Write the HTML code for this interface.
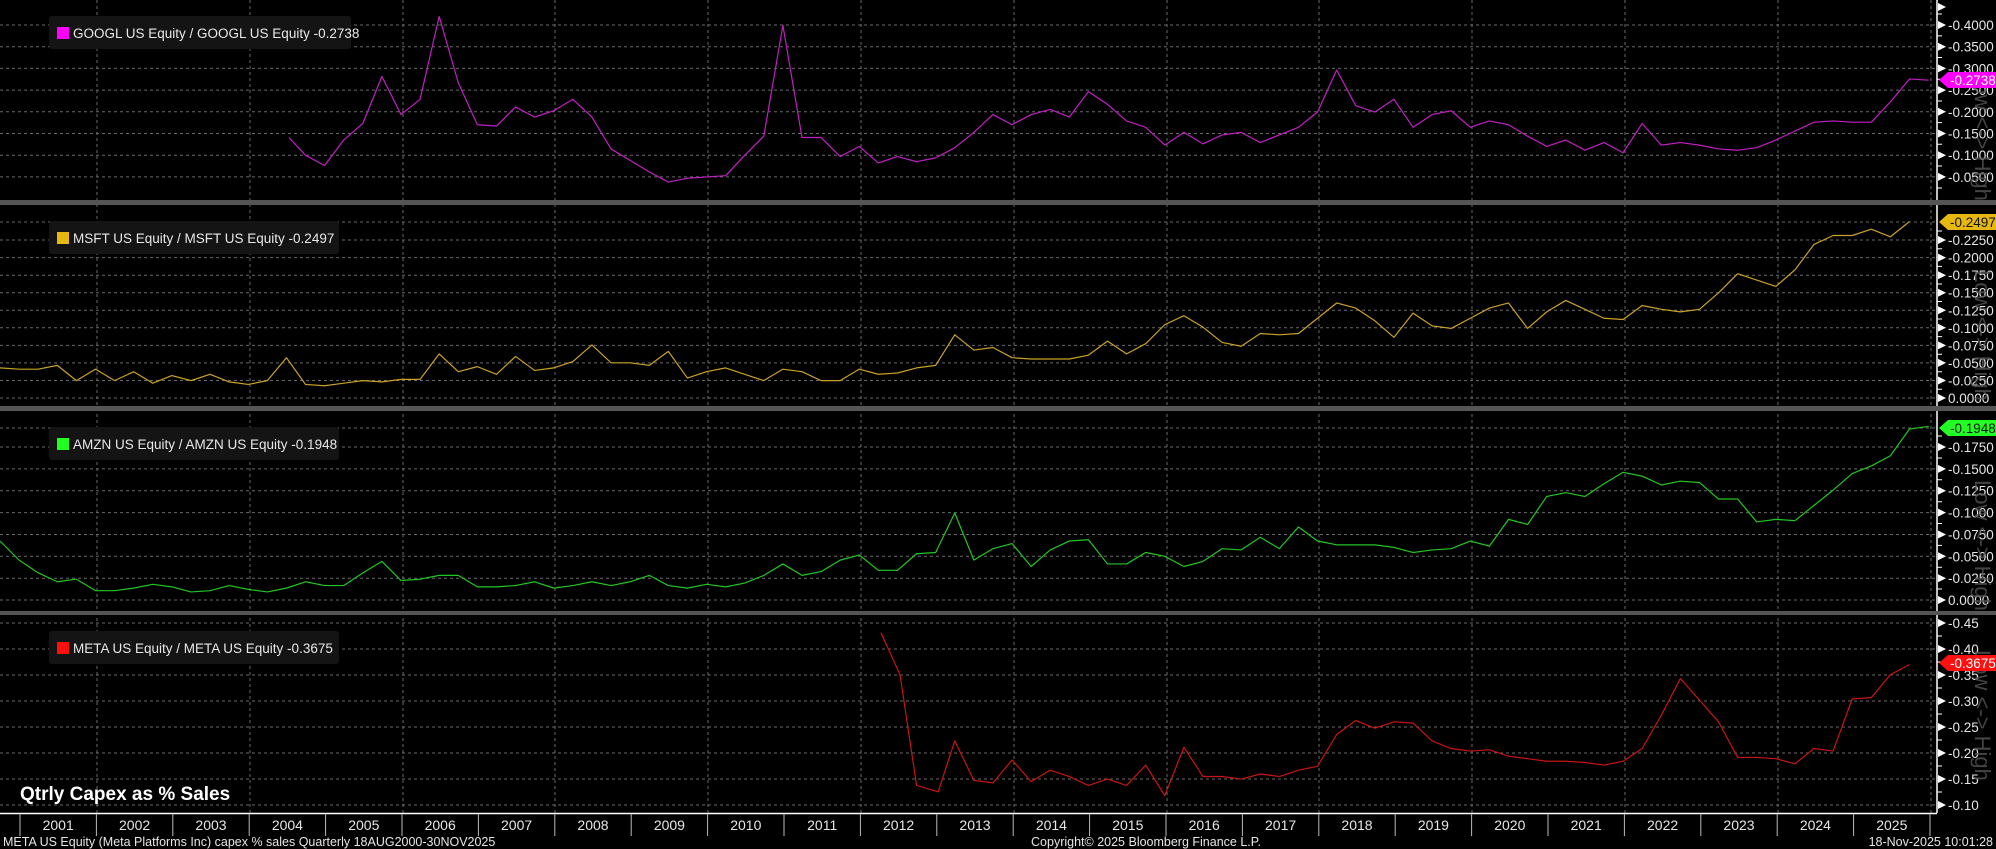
<!DOCTYPE html>
<html><head><meta charset="utf-8"><style>
html,body{margin:0;padding:0;background:#000;overflow:hidden}
svg{display:block}
text{font-family:"Liberation Sans","DejaVu Sans",sans-serif}
</style></head><body>
<svg width="1996" height="849" viewBox="0 0 1996 849" xmlns="http://www.w3.org/2000/svg">
<rect width="1996" height="849" fill="#000"/>
<g stroke="#6a6a6a" stroke-width="1" stroke-dasharray="3,3">
<path d="M0 25H1937M0 46.7H1937M0 68.4H1937M0 90.1H1937M0 111.8H1937M0 133.5H1937M0 155.2H1937M0 176.9H1937"/>
<path d="M0 222H1937M0 240H1937M0 257.6H1937M0 275.2H1937M0 292.7H1937M0 310.3H1937M0 327.8H1937M0 345.4H1937M0 362.9H1937M0 380.5H1937M0 398H1937"/>
<path d="M0 428H1937M0 447H1937M0 468.9H1937M0 490.7H1937M0 512.6H1937M0 534.5H1937M0 556.3H1937M0 578.2H1937M0 600H1937"/>
<path d="M0 623H1937M0 649H1937M0 675H1937M0 701H1937M0 727H1937M0 753H1937M0 779H1937M0 805H1937"/>
<path d="M97 0V813M250 0V813M403 0V813M555 0V813M708 0V813M861 0V813M1014 0V813M1167 0V813M1319 0V813M1472 0V813M1625 0V813M1778 0V813M1931 0V813"/>
</g>
<rect x="0" y="200" width="1996" height="5" fill="#555"/>
<rect x="0" y="406" width="1996" height="5" fill="#555"/>
<rect x="0" y="611" width="1996" height="4" fill="#555"/>
<g stroke="#fff" stroke-width="1.5">
<path d="M1937 0V200M1937 205V406M1937 411V611M1937 615V813"/>
<path d="M0 813.5H1937"/>
</g>
<g fill="#fff">
<path d="M1938 21l8 4-8 4zM1938 42.7l8 4-8 4zM1938 64.4l8 4-8 4zM1938 86.1l8 4-8 4zM1938 107.8l8 4-8 4zM1938 129.5l8 4-8 4zM1938 151.2l8 4-8 4zM1938 172.9l8 4-8 4zM1938 3l8 4-8 4z"/>
<path d="M1938 236l8 4-8 4zM1938 253.6l8 4-8 4zM1938 271.2l8 4-8 4zM1938 288.7l8 4-8 4zM1938 306.3l8 4-8 4zM1938 323.8l8 4-8 4zM1938 341.4l8 4-8 4zM1938 358.9l8 4-8 4zM1938 376.5l8 4-8 4zM1938 394l8 4-8 4z"/>
<path d="M1938 443l8 4-8 4zM1938 464.9l8 4-8 4zM1938 486.7l8 4-8 4zM1938 508.6l8 4-8 4zM1938 530.5l8 4-8 4zM1938 552.3l8 4-8 4zM1938 574.2l8 4-8 4zM1938 596l8 4-8 4z"/>
<path d="M1938 619l8 4-8 4zM1938 645l8 4-8 4zM1938 671l8 4-8 4zM1938 697l8 4-8 4zM1938 723l8 4-8 4zM1938 749l8 4-8 4zM1938 775l8 4-8 4zM1938 801l8 4-8 4z"/>
</g>
<g stroke="#fff" stroke-width="1">
<path d="M1937 14H1942M1937 35.9H1942M1937 57.5H1942M1937 79.2H1942M1937 101H1942M1937 122.6H1942M1937 144.3H1942M1937 166H1942M1937 188H1942"/>
<path d="M1937 231H1942M1937 248.8H1942M1937 266.4H1942M1937 284H1942M1937 301.5H1942M1937 319H1942M1937 336.6H1942M1937 354.2H1942M1937 371.7H1942M1937 389.2H1942"/>
<path d="M1937 436H1942M1937 458H1942M1937 479.8H1942M1937 501.7H1942M1937 523.5H1942M1937 545.4H1942M1937 567.3H1942M1937 589H1942"/>
<path d="M1937 636H1942M1937 662H1942M1937 688H1942M1937 714H1942M1937 740H1942M1937 766H1942M1937 792H1942"/>
</g>
<g fill="#e6e6e6" font-size="13.5">
<text x="1948" y="30">-0.4000</text><text x="1948" y="51.7">-0.3500</text><text x="1948" y="73.4">-0.3000</text><text x="1948" y="95.1">-0.2500</text><text x="1948" y="116.8">-0.2000</text><text x="1948" y="138.5">-0.1500</text><text x="1948" y="160.2">-0.1000</text><text x="1948" y="181.9">-0.0500</text>
<text x="1948" y="245">-0.2250</text><text x="1948" y="262.6">-0.2000</text><text x="1948" y="280.2">-0.1750</text><text x="1948" y="297.7">-0.1500</text><text x="1948" y="315.3">-0.1250</text><text x="1948" y="332.8">-0.1000</text><text x="1948" y="350.4">-0.0750</text><text x="1948" y="367.9">-0.0500</text><text x="1948" y="385.5">-0.0250</text><text x="1948" y="403">0.0000</text>
<text x="1948" y="452">-0.1750</text><text x="1948" y="473.9">-0.1500</text><text x="1948" y="495.7">-0.1250</text><text x="1948" y="517.6">-0.1000</text><text x="1948" y="539.5">-0.0750</text><text x="1948" y="561.3">-0.0500</text><text x="1948" y="583.2">-0.0250</text><text x="1948" y="605">0.0000</text>
<text x="1948" y="628">-0.45</text><text x="1948" y="654">-0.40</text><text x="1948" y="680">-0.35</text><text x="1948" y="706">-0.30</text><text x="1948" y="732">-0.25</text><text x="1948" y="758">-0.20</text><text x="1948" y="784">-0.15</text><text x="1948" y="810">-0.10</text>
</g>
<g fill="#555" font-size="22" opacity="0.8">
<text transform="translate(1975,70) rotate(90)">Low &lt;-&gt; High</text>
<text transform="translate(1975,270) rotate(90)">Low &lt;-&gt; High</text>
<text transform="translate(1975,480) rotate(90)">Low &lt;-&gt; High</text>
<text transform="translate(1975,650) rotate(90)">Low &lt;-&gt; High</text>
</g>
<g transform="scale(1.273)" fill="none" stroke-width="1.2" stroke-linejoin="round">
<polyline vector-effect="non-scaling-stroke" stroke="#c21fc2" points="227,108 240,122 255,130 270,110 285,97 300,60 315,90 330,78 345,13 360,65 375,98 390,99 405,84 420,92 435,87 450,78 465,92 480,117 495,126 510,135 525,143 540,140 555,139 570,138 585,122 600,107 615,20 630,108 645,108 660,123 675,115 690,128 705,123 720,127 735,124 750,116 765,104 780,90 795,98 810,90 825,86 840,92 855,72 870,82 885,95 900,100 915,114 930,104 945,113 960,106 975,104 990,112 1005,106 1020,100 1035,88 1050,55 1065,83 1080,88 1095,78 1110,100 1125,90 1140,87 1155,100 1170,95 1185,98 1200,107 1215,115 1230,110 1245,118 1260,112 1275,120 1290,97 1305,114 1320,112 1335,114 1350,117 1365,118 1380,116 1395,110 1410,103 1425,96 1440,95 1455,96 1470,96 1485,80 1500,62 1515,63"/>
<polyline vector-effect="non-scaling-stroke" stroke="#c9a227" points="0,289 15,290 30,290 45,287 60,299 75,290 90,299 105,292 120,301 135,295 150,299 165,294 180,300 195,302 210,299 225,281 240,302 255,303 270,301 285,299 300,300 315,298 330,298 345,278 360,292 375,288 390,294 405,280 420,291 435,289 450,284 465,271 480,285 495,285 510,287 525,276 540,297 555,292 570,289 585,294 600,299 615,290 630,292 645,299 660,299 675,290 690,294 705,293 720,289 735,287 750,263 765,275 780,273 795,281 810,282 825,282 840,282 855,279 870,268 885,278 900,270 915,255 930,248 945,257 960,269 975,272 990,262 1005,263 1020,262 1035,250 1050,238 1065,242 1080,252 1095,265 1110,246 1125,256 1140,258 1155,250 1170,242 1185,238 1200,258 1215,245 1230,236 1245,243 1260,250 1275,251 1290,240 1305,243 1320,245 1335,243 1350,230 1365,215 1380,220 1395,225 1410,212 1425,192 1440,185 1455,185 1470,180 1485,186 1500,174"/>
<polyline vector-effect="non-scaling-stroke" stroke="#22c622" points="0,425 15,440 30,450 45,457 60,455 75,464 90,464 105,462 120,459 135,461 150,465 165,464 180,460 195,463 210,465 225,462 240,457 255,460 270,460 285,450 300,441 315,456 330,455 345,452 360,452 375,461 390,461 405,460 420,457 435,462 450,460 465,457 480,460 495,457 510,452 525,460 540,462 555,459 570,461 585,458 600,452 615,443 630,452 645,449 660,440 675,436 690,448 705,448 720,435 735,434 750,403 765,440 780,431 795,427 810,445 825,432 840,425 855,424 870,443 885,443 900,434 915,437 930,445 945,441 960,431 975,432 990,422 1005,431 1020,414 1035,425 1050,428 1065,428 1080,428 1095,430 1110,434 1125,432 1140,431 1155,425 1170,429 1185,408 1200,412 1215,390 1230,387 1245,390 1260,380 1275,371 1290,374 1305,381 1320,378 1335,379 1350,392 1365,392 1380,410 1395,408 1410,409 1425,397 1440,385 1455,372 1470,366 1485,358 1500,337 1515,335"/>
<polyline vector-effect="non-scaling-stroke" stroke="#c81414" points="692,497 707,530 720,617 737,622 750,582 765,613 780,615 795,597 810,614 825,605 840,610 855,617 870,612 885,617 900,601 915,625 930,587 945,610 960,610 975,612 990,608 1005,610 1020,605 1035,602 1050,577 1065,566 1080,572 1095,567 1110,568 1125,582 1140,588 1155,590 1170,589 1185,594 1200,596 1215,598 1230,598 1245,599 1260,601 1275,598 1290,588 1305,562 1320,533 1335,550 1350,567 1365,595 1380,595 1395,596 1410,600 1425,588 1440,590 1455,549 1470,548 1485,530 1500,522"/>
</g>
<path d="M1939 80l9-8h48v16h-48z" fill="#ff00ff"/><text x="1950" y="85" font-size="13.5" fill="#fff">-0.2738</text>
<path d="M1939 222l9-8h48v16h-48z" fill="#e6b812"/><text x="1950" y="227" font-size="13.5" fill="#111">-0.2497</text>
<path d="M1939 428l9-8h48v16h-48z" fill="#22ff22"/><text x="1950" y="433" font-size="13.5" fill="#111">-0.1948</text>
<path d="M1939 663l9-8h48v16h-48z" fill="#ff1010"/><text x="1950" y="668" font-size="13.5" fill="#fff">-0.3675</text>
<g font-size="13.5" fill="#e8e8e8">
<rect x="49" y="16" width="302" height="33" rx="3" fill="#141414"/><rect x="57" y="27" width="12" height="12" fill="#ff00ff"/><text x="73" y="38">GOOGL US Equity / GOOGL US Equity -0.2738</text>
<rect x="49" y="221" width="290" height="33" rx="3" fill="#141414"/><rect x="57" y="232" width="12" height="12" fill="#e6b812"/><text x="73" y="243">MSFT US Equity / MSFT US Equity -0.2497</text>
<rect x="49" y="427" width="290" height="33" rx="3" fill="#141414"/><rect x="57" y="438" width="12" height="12" fill="#22ff22"/><text x="73" y="449">AMZN US Equity / AMZN US Equity -0.1948</text>
<rect x="49" y="631" width="290" height="33" rx="3" fill="#141414"/><rect x="57" y="642" width="12" height="12" fill="#ff1010"/><text x="73" y="653">META US Equity / META US Equity -0.3675</text>
</g>
<text x="20" y="800" font-size="19" font-weight="bold" fill="#fff">Qtrly Capex as % Sales</text>
<g stroke="#bbb" stroke-width="1"><path d="M20 814V836M96.4 814V836M172.8 814V836M249.2 814V836M325.6 814V836M402 814V836M478.4 814V836M554.8 814V836M631.2 814V836M707.6 814V836M784 814V836M860.4 814V836M936.8 814V836M1013.2 814V836M1089.6 814V836M1166 814V836M1242.4 814V836M1318.8 814V836M1395.2 814V836M1471.6 814V836M1548 814V836M1624.4 814V836M1700.8 814V836M1777.2 814V836M1853.6 814V836M1930 814V836"/></g>
<g font-size="14" fill="#e6e6e6" text-anchor="middle">
<text x="58.2" y="830">2001</text><text x="134.6" y="830">2002</text><text x="211" y="830">2003</text><text x="287.4" y="830">2004</text><text x="363.8" y="830">2005</text><text x="440.2" y="830">2006</text><text x="516.6" y="830">2007</text><text x="593" y="830">2008</text><text x="669.4" y="830">2009</text><text x="745.8" y="830">2010</text><text x="822.2" y="830">2011</text><text x="898.6" y="830">2012</text><text x="975" y="830">2013</text><text x="1051.4" y="830">2014</text><text x="1127.8" y="830">2015</text><text x="1204.2" y="830">2016</text><text x="1280.6" y="830">2017</text><text x="1357" y="830">2018</text><text x="1433.4" y="830">2019</text><text x="1509.8" y="830">2020</text><text x="1586.2" y="830">2021</text><text x="1662.6" y="830">2022</text><text x="1739" y="830">2023</text><text x="1815.4" y="830">2024</text><text x="1891.8" y="830">2025</text>
</g>
<g font-size="12.5" fill="#e6e6e6">
<text x="3" y="846">META US Equity (Meta Platforms Inc) capex % sales Quarterly 18AUG2000-30NOV2025</text>
<text x="1146" y="846" text-anchor="middle">Copyright© 2025 Bloomberg Finance L.P.</text>
<text x="1993" y="846" text-anchor="end">18-Nov-2025 10:01:28</text>
</g>
</svg>
</body></html>
